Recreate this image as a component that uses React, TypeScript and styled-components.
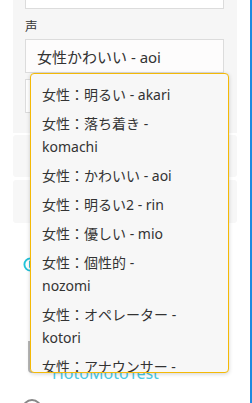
import React from "react";
import styled, { createGlobalStyle } from "styled-components";

const GlobalStyle = createGlobalStyle`
  html, body {
    margin: 0;
    padding: 0;
    background: #ffffff;
    overflow: hidden;
  }
  body {
    font-family: "Noto Sans", "Noto Sans CJK JP", sans-serif;
    color: #333333;
  }
`;

const voices = [
  "女性：明るい - akari",
  "女性：落ち着き - komachi",
  "女性：かわいい - aoi",
  "女性：明るい2 - rin",
  "女性：優しい - mio",
  "女性：個性的 - nozomi",
  "女性：オペレーター - kotori",
  "女性：アナウンサー - hikari",
  "男性：落ち着き - takeru",
];

const Page = styled.div`
  display: flex;
  height: 403px;
  overflow: hidden;
`;

const Main = styled.div`
  width: 250px;
  padding-left: 13px;
  box-sizing: border-box;
  display: flex;
  flex-direction: column;

  & > * {
    flex: none;
  }
`;

const EdgeBar = styled.div`
  width: 2px;
  background: #1b8ae0;
`;

const Panel = styled.section`
  width: 224px;
  background: #f6f6f6;
  padding: 0 13px 20px 12px;
  box-sizing: border-box;
`;

const TextBox = styled.div<{ $cut?: boolean }>`
  height: 34px;
  box-sizing: border-box;
  background: #ffffff;
  border: 1px solid #dcdcdc;
  margin-top: ${(p) => (p.$cut ? "-25px" : "6px")};
`;

const Label = styled.div`
  font-size: 12.5px;
  line-height: 14px;
  margin: 11px 0 5px;
  color: #333;
`;

const SelectWrap = styled.div`
  position: relative;
`;

const SelectBox = styled.div`
  height: 34px;
  box-sizing: border-box;
  background: #fdfcfc;
  border: 1px solid #dcdcdc;
  padding-left: 11px;
  display: flex;
  align-items: center;
  font-size: 15px;
  color: #333;
`;

const Dropdown = styled.ul`
  position: absolute;
  top: 100%;
  left: 5px;
  width: 199px;
  height: 300px;
  margin: 0;
  padding: 6px 0 0;
  list-style: none;
  box-sizing: border-box;
  background: #f7f7f7;
  border: 1.5px solid #f4b906;
  border-radius: 4px;
  box-shadow: 0 1px 4px rgba(0, 0, 0, 0.18);
  overflow: hidden;
  z-index: 5;
`;

const Option = styled.li`
  font-size: 14px;
  line-height: 23px;
  padding: 3px 45px 3px 11px;
  color: #333;
`;

const Card = styled.div<{ $h: number }>`
  width: 224px;
  height: ${(p) => p.$h}px;
  background: #f7f7f7;
  border-radius: 3px;
  margin-top: ${(p) => (p.$h > 42 ? 3 : 2)}px;
`;

const IconRow = styled.div`
  display: flex;
  align-items: center;
  padding-left: 10px;
  margin-top: 34px;
  height: 15px;
`;

const TestRow = styled.div`
  display: flex;
  align-items: flex-start;
  gap: 4px;
  margin: 69px 0 0 15px;
`;

const Bracket = styled.div`
  flex: none;
  width: 20px;
  height: 32px;
  box-sizing: border-box;
  border-left: 2px solid #b9b9b9;
  border-bottom: 2px solid #b9b9b9;
  border-bottom-left-radius: 4px;
`;

const TestName = styled.span`
  margin-top: 23px;
  font-size: 16px;
  line-height: 18px;
  color: #4cc9df;
`;

const Ring = styled.div`
  margin: 17px 0 0 9px;
  width: 20px;
  height: 20px;
  border-radius: 50%;
  border: 2px solid #888;
  box-sizing: border-box;
`;

export default function App() {
  return (
    <>
      <GlobalStyle />
      <Page>
        <Main>
          <Panel>
            <TextBox $cut />
            <Label>声</Label>
            <SelectWrap>
              <SelectBox>女性かわいい - aoi</SelectBox>
              <Dropdown>
                {voices.map((v) => (
                  <Option key={v}>{v}</Option>
                ))}
              </Dropdown>
            </SelectWrap>
            <TextBox />
          </Panel>
          <Card $h={42} />
          <Card $h={43} />
          <IconRow>
            <svg width="15" height="15" viewBox="0 0 16 16">
              <circle cx="8" cy="8" r="6.5" fill="none" stroke="#22c3d9" strokeWidth="2" />
              <path d="M7.5 4 V10.5 H11" fill="none" stroke="#22c3d9" strokeWidth="2" />
            </svg>
          </IconRow>
          <TestRow>
            <Bracket />
            <TestName>HotoMotoTest</TestName>
          </TestRow>
          <Ring />
        </Main>
        <EdgeBar />
      </Page>
    </>
  );
}
